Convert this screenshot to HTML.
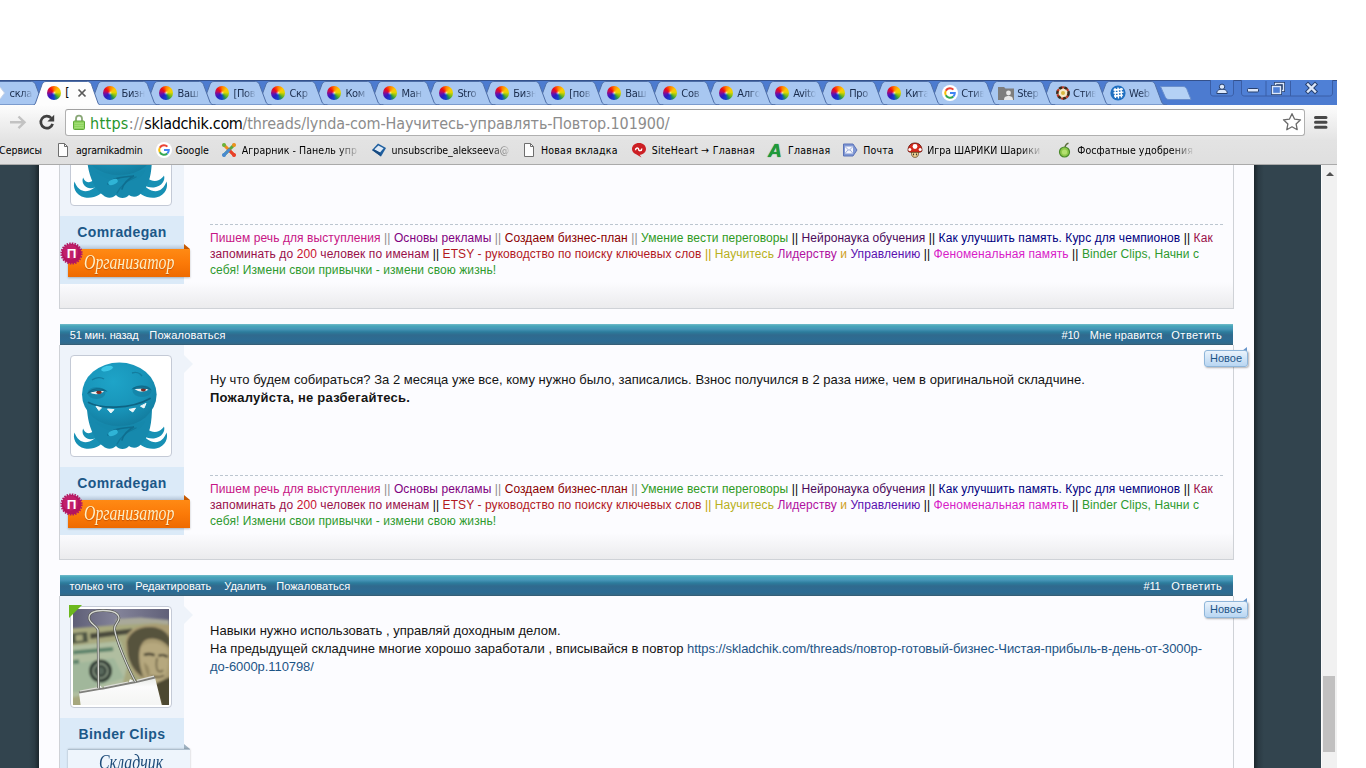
<!DOCTYPE html><html lang="ru"><head><meta charset="utf-8"><title>skladchik</title><style>
html,body{margin:0;padding:0}
body{width:1366px;height:768px;overflow:hidden;background:#fff;position:relative;font-family:"Liberation Sans",sans-serif}
#win{position:absolute;left:0;top:80px;width:1337px;height:688px;overflow:hidden;background:#fcfcff}
.abs{position:absolute}
#tabstrip{position:absolute;left:0;top:0;width:1337px;height:25px;background:#4c7bd0}
#toolbar{position:absolute;left:0;top:25px;width:1337px;height:35px;background:linear-gradient(#fdfdfd,#f1f1f1 45%,#e4e4e4)}
#bmbar{position:absolute;left:0;top:60px;width:1337px;height:24px;background:linear-gradient(#e3e3e3,#dfdfdf);border-bottom:1px solid #aaa;font-family:"DejaVu Sans Condensed","DejaVu Sans",sans-serif;font-size:10.5px;color:#000;white-space:nowrap}
.bm{position:absolute;top:3px;line-height:14px;letter-spacing:-0.25px}
.bmi{position:absolute;top:2px;width:16px;height:16px}
#omni{position:absolute;left:65px;top:4px;width:1238px;height:25px;background:#fff;border:1px solid #b0b0b0;border-top-color:#a0a0a0;border-radius:3px}
#url{position:absolute;left:24px;top:4px;font-family:"DejaVu Sans Condensed","DejaVu Sans",sans-serif;font-size:16px;line-height:20px;white-space:nowrap;color:#8c8c8c}
.tt{position:absolute;top:6.6px;height:14px;overflow:hidden;font-family:"DejaVu Sans Condensed","DejaVu Sans",sans-serif;font-size:11px;line-height:14px;letter-spacing:-.3px;white-space:nowrap;color:#1a2c4c}
.fade{-webkit-mask-image:linear-gradient(90deg,#000 50%,transparent 100%);mask-image:linear-gradient(90deg,#000 50%,transparent 100%)}
#page{position:absolute;left:0;top:85px;width:1321px;height:603px;background:#32444e;overflow:hidden}
#content{position:absolute;left:39px;top:0;width:1215px;height:603px;background:#fcfcff}
#sbar{position:absolute;left:1321px;top:85px;width:16px;height:603px;background:#f1f1f1}
.post{position:absolute;left:59px;width:1173px;border:1px solid #cfd2d7;border-top:none}
.hdr{position:absolute;left:60px;width:1173px;height:21px;background:linear-gradient(#74bccb 0,#47a6ba 2px,#4796b8 5px,#2c7c9c 8px,#306a8e 11px,#2c6c94 17px,#326a8a 19.5px,#36596f 21px);color:#fff;font-size:11px;line-height:21px;white-space:nowrap}
.hdr span{position:absolute;top:1px}
.ucol{position:absolute;left:60px;width:124px;background:#eef3fa}
.arrow{position:absolute;left:184px;width:0;height:0;border:9px solid transparent;border-left:9px solid #eef3fa;border-right:none}
.ava{position:absolute;left:70px;width:100px;height:100px;border:1px solid #c4cad6;border-radius:4px;background:#fff;overflow:hidden}
.ava svg{position:absolute;left:0;top:0}
.uname{position:absolute;left:60px;width:124px;text-align:center;font-weight:bold;font-size:14px;color:#1c5888;letter-spacing:.37px;line-height:18px}
.msg{position:absolute;left:210px;font-size:13px;line-height:18px;color:#141414;letter-spacing:.03px;white-space:nowrap}
.sig{position:absolute;left:210px;width:1013px;font-size:12px;line-height:16px;letter-spacing:.085px;white-space:nowrap}
.dash{position:absolute;left:210px;width:1013px;height:0;border-top:1px dashed #bcc6d0}
.new{position:absolute;left:1204px;width:42px;height:15px;border:1px solid #8fb6da;border-radius:3px;background:linear-gradient(#eaf3fc,#b9d6f2);color:#1c5486;font-size:11px;line-height:15px;text-align:center;box-shadow:1px 1px 2px rgba(0,0,0,.3)}
.newfold{position:absolute;left:1242px;width:0;height:0;border-left:5px solid transparent;border-bottom:4px solid #6896cc}
.rib{position:absolute;left:68px;width:122px;height:28px;background:linear-gradient(#ff8a14,#fb7a08 50%,#ee6a00);box-shadow:0 1px 2px rgba(0,0,0,.25)}
.ribfold{position:absolute;left:184px;width:0;height:0;border-left:6px solid #c85a00;border-top:5px solid transparent}
.ribt{position:absolute;left:84px;width:110px;font-family:"Liberation Serif",serif;font-style:italic;font-size:20px;line-height:28px;color:#ffefc4;white-space:nowrap;transform-origin:0 50%;transform:scaleX(.79);text-shadow:0 1px 1px rgba(160,60,0,.6)}
.badge{position:absolute;left:61px;width:21px;height:21px;border-radius:50%;background:radial-gradient(circle at 40% 35%,#d8307c,#a8105a 70%,#8a0848);color:#fff;font-weight:bold;font-size:13px;line-height:23px;text-align:center;box-shadow:0 0 0 1px rgba(168,16,90,.5)}
</style></head><body>
<div id="win">
<div id="tabstrip">
<svg class="abs" style="left:0;top:0" width="1337" height="25" viewBox="0 0 1337 25"><rect x="0" y="0" width="1337" height="1" fill="#34518c"/><path d="M1093.62,25 C1097.12,25 1098.12,24 1099.12,22 L1105.62,4.5 C1106.62,2.5 1107.62,1.5 1109.62,1.5 L1151.12,1.5 C1153.12,1.5 1154.12,2.5 1155.12,4.5 L1161.62,22 C1162.62,24 1163.62,25 1167.12,25 Z" fill="#a8c7f1" stroke="#4f6fa8" stroke-width="1"/><path d="M1037.6399999999999,25 C1041.1399999999999,25 1042.1399999999999,24 1043.1399999999999,22 L1049.6399999999999,4.5 C1050.6399999999999,2.5 1051.6399999999999,1.5 1053.6399999999999,1.5 L1095.1399999999999,1.5 C1097.1399999999999,1.5 1098.1399999999999,2.5 1099.1399999999999,4.5 L1105.6399999999999,22 C1106.6399999999999,24 1107.6399999999999,25 1111.1399999999999,25 Z" fill="#a8c7f1" stroke="#4f6fa8" stroke-width="1"/><path d="M981.66,25 C985.16,25 986.16,24 987.16,22 L993.66,4.5 C994.66,2.5 995.66,1.5 997.66,1.5 L1039.1599999999999,1.5 C1041.1599999999999,1.5 1042.1599999999999,2.5 1043.1599999999999,4.5 L1049.6599999999999,22 C1050.6599999999999,24 1051.6599999999999,25 1055.1599999999999,25 Z" fill="#a8c7f1" stroke="#4f6fa8" stroke-width="1"/><path d="M925.68,25 C929.18,25 930.18,24 931.18,22 L937.68,4.5 C938.68,2.5 939.68,1.5 941.68,1.5 L983.18,1.5 C985.18,1.5 986.18,2.5 987.18,4.5 L993.68,22 C994.68,24 995.68,25 999.18,25 Z" fill="#a8c7f1" stroke="#4f6fa8" stroke-width="1"/><path d="M869.6999999999999,25 C873.1999999999999,25 874.1999999999999,24 875.1999999999999,22 L881.6999999999999,4.5 C882.6999999999999,2.5 883.6999999999999,1.5 885.6999999999999,1.5 L927.1999999999999,1.5 C929.1999999999999,1.5 930.1999999999999,2.5 931.1999999999999,4.5 L937.6999999999999,22 C938.6999999999999,24 939.6999999999999,25 943.1999999999999,25 Z" fill="#a8c7f1" stroke="#4f6fa8" stroke-width="1"/><path d="M813.7199999999999,25 C817.2199999999999,25 818.2199999999999,24 819.2199999999999,22 L825.7199999999999,4.5 C826.7199999999999,2.5 827.7199999999999,1.5 829.7199999999999,1.5 L871.2199999999999,1.5 C873.2199999999999,1.5 874.2199999999999,2.5 875.2199999999999,4.5 L881.7199999999999,22 C882.7199999999999,24 883.7199999999999,25 887.2199999999999,25 Z" fill="#a8c7f1" stroke="#4f6fa8" stroke-width="1"/><path d="M757.74,25 C761.24,25 762.24,24 763.24,22 L769.74,4.5 C770.74,2.5 771.74,1.5 773.74,1.5 L815.24,1.5 C817.24,1.5 818.24,2.5 819.24,4.5 L825.74,22 C826.74,24 827.74,25 831.24,25 Z" fill="#a8c7f1" stroke="#4f6fa8" stroke-width="1"/><path d="M701.76,25 C705.26,25 706.26,24 707.26,22 L713.76,4.5 C714.76,2.5 715.76,1.5 717.76,1.5 L759.26,1.5 C761.26,1.5 762.26,2.5 763.26,4.5 L769.76,22 C770.76,24 771.76,25 775.26,25 Z" fill="#a8c7f1" stroke="#4f6fa8" stroke-width="1"/><path d="M645.78,25 C649.28,25 650.28,24 651.28,22 L657.78,4.5 C658.78,2.5 659.78,1.5 661.78,1.5 L703.28,1.5 C705.28,1.5 706.28,2.5 707.28,4.5 L713.78,22 C714.78,24 715.78,25 719.28,25 Z" fill="#a8c7f1" stroke="#4f6fa8" stroke-width="1"/><path d="M589.8,25 C593.3,25 594.3,24 595.3,22 L601.8,4.5 C602.8,2.5 603.8,1.5 605.8,1.5 L647.3,1.5 C649.3,1.5 650.3,2.5 651.3,4.5 L657.8,22 C658.8,24 659.8,25 663.3,25 Z" fill="#a8c7f1" stroke="#4f6fa8" stroke-width="1"/><path d="M533.8199999999999,25 C537.3199999999999,25 538.3199999999999,24 539.3199999999999,22 L545.8199999999999,4.5 C546.8199999999999,2.5 547.8199999999999,1.5 549.8199999999999,1.5 L591.3199999999999,1.5 C593.3199999999999,1.5 594.3199999999999,2.5 595.3199999999999,4.5 L601.8199999999999,22 C602.8199999999999,24 603.8199999999999,25 607.3199999999999,25 Z" fill="#a8c7f1" stroke="#4f6fa8" stroke-width="1"/><path d="M477.84,25 C481.34,25 482.34,24 483.34,22 L489.84,4.5 C490.84,2.5 491.84,1.5 493.84,1.5 L535.3399999999999,1.5 C537.3399999999999,1.5 538.3399999999999,2.5 539.3399999999999,4.5 L545.8399999999999,22 C546.8399999999999,24 547.8399999999999,25 551.3399999999999,25 Z" fill="#a8c7f1" stroke="#4f6fa8" stroke-width="1"/><path d="M421.85999999999996,25 C425.35999999999996,25 426.35999999999996,24 427.35999999999996,22 L433.85999999999996,4.5 C434.85999999999996,2.5 435.85999999999996,1.5 437.85999999999996,1.5 L479.35999999999996,1.5 C481.35999999999996,1.5 482.35999999999996,2.5 483.35999999999996,4.5 L489.85999999999996,22 C490.85999999999996,24 491.85999999999996,25 495.35999999999996,25 Z" fill="#a8c7f1" stroke="#4f6fa8" stroke-width="1"/><path d="M365.88,25 C369.38,25 370.38,24 371.38,22 L377.88,4.5 C378.88,2.5 379.88,1.5 381.88,1.5 L423.38,1.5 C425.38,1.5 426.38,2.5 427.38,4.5 L433.88,22 C434.88,24 435.88,25 439.38,25 Z" fill="#a8c7f1" stroke="#4f6fa8" stroke-width="1"/><path d="M309.9,25 C313.4,25 314.4,24 315.4,22 L321.9,4.5 C322.9,2.5 323.9,1.5 325.9,1.5 L367.4,1.5 C369.4,1.5 370.4,2.5 371.4,4.5 L377.9,22 C378.9,24 379.9,25 383.4,25 Z" fill="#a8c7f1" stroke="#4f6fa8" stroke-width="1"/><path d="M253.91999999999996,25 C257.41999999999996,25 258.41999999999996,24 259.41999999999996,22 L265.91999999999996,4.5 C266.91999999999996,2.5 267.91999999999996,1.5 269.91999999999996,1.5 L311.41999999999996,1.5 C313.41999999999996,1.5 314.41999999999996,2.5 315.41999999999996,4.5 L321.91999999999996,22 C322.91999999999996,24 323.91999999999996,25 327.41999999999996,25 Z" fill="#a8c7f1" stroke="#4f6fa8" stroke-width="1"/><path d="M197.94,25 C201.44,25 202.44,24 203.44,22 L209.94,4.5 C210.94,2.5 211.94,1.5 213.94,1.5 L255.44,1.5 C257.44,1.5 258.44,2.5 259.44,4.5 L265.94,22 C266.94,24 267.94,25 271.44,25 Z" fill="#a8c7f1" stroke="#4f6fa8" stroke-width="1"/><path d="M141.95999999999998,25 C145.45999999999998,25 146.45999999999998,24 147.45999999999998,22 L153.95999999999998,4.5 C154.95999999999998,2.5 155.95999999999998,1.5 157.95999999999998,1.5 L199.45999999999998,1.5 C201.45999999999998,1.5 202.45999999999998,2.5 203.45999999999998,4.5 L209.95999999999998,22 C210.95999999999998,24 211.95999999999998,25 215.45999999999998,25 Z" fill="#a8c7f1" stroke="#4f6fa8" stroke-width="1"/><path d="M85.97999999999999,25 C89.47999999999999,25 90.47999999999999,24 91.47999999999999,22 L97.97999999999999,4.5 C98.97999999999999,2.5 99.97999999999999,1.5 101.97999999999999,1.5 L143.48,1.5 C145.48,1.5 146.48,2.5 147.48,4.5 L153.98,22 C154.98,24 155.98,25 159.48,25 Z" fill="#a8c7f1" stroke="#4f6fa8" stroke-width="1"/><path d="M-25.979999999999997,25 C-22.479999999999997,25 -21.479999999999997,24 -20.479999999999997,22 L-13.979999999999997,4.5 C-12.979999999999997,2.5 -11.979999999999997,1.5 -9.979999999999997,1.5 L31.520000000000003,1.5 C33.52,1.5 34.52,2.5 35.52,4.5 L42.02,22 C43.02,24 44.02,25 47.52,25 Z" fill="#a8c7f1" stroke="#4f6fa8" stroke-width="1"/><path d="M30,26 C33.5,26 34.5,25 35.5,23 L42,4.5 C43,2.5 44,1.5 46,1.5 L87.5,1.5 C89.5,1.5 90.5,2.5 91.5,4.5 L98.0,23 C99.0,25 100.0,26 103.5,26 Z" fill="#fdfdfd" stroke="#4f6fa8" stroke-width="1"/><path d="M1160.5,6.5 L1183,6.5 C1185,6.5 1186,7.5 1187,9.5 L1191,19.5 L1169,19.5 C1167,19.5 1166,18.5 1165,16.5 Z" fill="#b4d1f5" stroke="#6a8fcc" stroke-width="1"/><path d="M1210.5,0 L1210.5,13 C1210.5,15 1211.5,16 1213.5,16 L1230.5,16 C1232.5,16 1233.5,15 1233.5,13 L1233.5,0" fill="#4f80d6" stroke="#3a5ea6" stroke-width="1"/><path d="M1241.5,0 L1241.5,13 C1241.5,15 1242.5,16 1244.5,16 L1329.5,16 C1331.5,16 1332.5,15 1332.5,13 L1332.5,0" fill="#4f80d6" stroke="#3a5ea6" stroke-width="1"/><path d="M1266,1 V16 M1290.5,1 V16" stroke="#3a5ea6" stroke-width="1"/><circle cx="1222" cy="6.8" r="2.7" fill="#dce8fb" stroke="#27406f" stroke-width="1"/><path d="M1216.8,13.5 C1216.8,10 1219,9.3 1222,9.3 C1225,9.3 1227.2,10 1227.2,13.5 Z" fill="#dce8fb" stroke="#27406f" stroke-width="1"/><rect x="1247.5" y="8.5" width="11" height="3.5" rx="1" fill="#dce8fb" stroke="#27406f" stroke-width="1"/><rect x="1275.5" y="3.5" width="8" height="7" fill="none" stroke="#27406f" stroke-width="3"/><rect x="1275.5" y="3.5" width="8" height="7" fill="none" stroke="#dce8fb" stroke-width="1.4"/><rect x="1272.5" y="6.5" width="8" height="7" fill="#4f80d6" stroke="#27406f" stroke-width="3"/><rect x="1272.5" y="6.5" width="8" height="7" fill="#4f80d6" stroke="#dce8fb" stroke-width="1.4"/><path d="M1308,4.5 L1315,11.5 M1315,4.5 L1308,11.5" stroke="#27406f" stroke-width="4.4" stroke-linecap="square"/><path d="M1308,4.5 L1315,11.5 M1315,4.5 L1308,11.5" stroke="#dce8fb" stroke-width="2.4" stroke-linecap="square"/><path d="M78.5,9.5 L85.5,16.5 M85.5,9.5 L78.5,16.5" stroke="#5a5a5a" stroke-width="1.7"/></svg>
<div class="abs" style="left:46.8px;top:5.8px;width:14.2px;height:14.4px;border-radius:50%;background:radial-gradient(circle,rgba(255,255,255,.9) 0,rgba(255,255,255,.3) 10%,rgba(255,255,255,0) 24%),conic-gradient(from 0deg,#ff7a00,#ffc800 50deg,#e0d400 85deg,#6cb81e 125deg,#1f8f5f 150deg,#1440d0 180deg,#2a1ec0 225deg,#6010b0 255deg,#b80c60 285deg,#ee0c18 315deg,#ff4a00 345deg,#ff7a00)"></div>
<div class="tt" style="left:65.3px;width:8px;color:#000;font-size:12px;top:5.6px">[</div>
<div class="abs" style="left:102.8px;top:5.8px;width:14.2px;height:14.4px;border-radius:50%;background:radial-gradient(circle,rgba(255,255,255,.9) 0,rgba(255,255,255,.3) 10%,rgba(255,255,255,0) 24%),conic-gradient(from 0deg,#ff7a00,#ffc800 50deg,#e0d400 85deg,#6cb81e 125deg,#1f8f5f 150deg,#1440d0 180deg,#2a1ec0 225deg,#6010b0 255deg,#b80c60 285deg,#ee0c18 315deg,#ff4a00 345deg,#ff7a00)"></div>
<div class="tt fade" style="left:121.5px;width:23px">Бизн</div>
<div class="abs" style="left:158.8px;top:5.8px;width:14.2px;height:14.4px;border-radius:50%;background:radial-gradient(circle,rgba(255,255,255,.9) 0,rgba(255,255,255,.3) 10%,rgba(255,255,255,0) 24%),conic-gradient(from 0deg,#ff7a00,#ffc800 50deg,#e0d400 85deg,#6cb81e 125deg,#1f8f5f 150deg,#1440d0 180deg,#2a1ec0 225deg,#6010b0 255deg,#b80c60 285deg,#ee0c18 315deg,#ff4a00 345deg,#ff7a00)"></div>
<div class="tt fade" style="left:177.5px;width:23px">Ваш</div>
<div class="abs" style="left:214.7px;top:5.8px;width:14.2px;height:14.4px;border-radius:50%;background:radial-gradient(circle,rgba(255,255,255,.9) 0,rgba(255,255,255,.3) 10%,rgba(255,255,255,0) 24%),conic-gradient(from 0deg,#ff7a00,#ffc800 50deg,#e0d400 85deg,#6cb81e 125deg,#1f8f5f 150deg,#1440d0 180deg,#2a1ec0 225deg,#6010b0 255deg,#b80c60 285deg,#ee0c18 315deg,#ff4a00 345deg,#ff7a00)"></div>
<div class="tt fade" style="left:233.4px;width:23px">[Пов</div>
<div class="abs" style="left:270.7px;top:5.8px;width:14.2px;height:14.4px;border-radius:50%;background:radial-gradient(circle,rgba(255,255,255,.9) 0,rgba(255,255,255,.3) 10%,rgba(255,255,255,0) 24%),conic-gradient(from 0deg,#ff7a00,#ffc800 50deg,#e0d400 85deg,#6cb81e 125deg,#1f8f5f 150deg,#1440d0 180deg,#2a1ec0 225deg,#6010b0 255deg,#b80c60 285deg,#ee0c18 315deg,#ff4a00 345deg,#ff7a00)"></div>
<div class="tt fade" style="left:289.4px;width:23px">Скр</div>
<div class="abs" style="left:326.7px;top:5.8px;width:14.2px;height:14.4px;border-radius:50%;background:radial-gradient(circle,rgba(255,255,255,.9) 0,rgba(255,255,255,.3) 10%,rgba(255,255,255,0) 24%),conic-gradient(from 0deg,#ff7a00,#ffc800 50deg,#e0d400 85deg,#6cb81e 125deg,#1f8f5f 150deg,#1440d0 180deg,#2a1ec0 225deg,#6010b0 255deg,#b80c60 285deg,#ee0c18 315deg,#ff4a00 345deg,#ff7a00)"></div>
<div class="tt fade" style="left:345.4px;width:23px">Ком</div>
<div class="abs" style="left:382.7px;top:5.8px;width:14.2px;height:14.4px;border-radius:50%;background:radial-gradient(circle,rgba(255,255,255,.9) 0,rgba(255,255,255,.3) 10%,rgba(255,255,255,0) 24%),conic-gradient(from 0deg,#ff7a00,#ffc800 50deg,#e0d400 85deg,#6cb81e 125deg,#1f8f5f 150deg,#1440d0 180deg,#2a1ec0 225deg,#6010b0 255deg,#b80c60 285deg,#ee0c18 315deg,#ff4a00 345deg,#ff7a00)"></div>
<div class="tt fade" style="left:401.4px;width:23px">Ман</div>
<div class="abs" style="left:438.7px;top:5.8px;width:14.2px;height:14.4px;border-radius:50%;background:radial-gradient(circle,rgba(255,255,255,.9) 0,rgba(255,255,255,.3) 10%,rgba(255,255,255,0) 24%),conic-gradient(from 0deg,#ff7a00,#ffc800 50deg,#e0d400 85deg,#6cb81e 125deg,#1f8f5f 150deg,#1440d0 180deg,#2a1ec0 225deg,#6010b0 255deg,#b80c60 285deg,#ee0c18 315deg,#ff4a00 345deg,#ff7a00)"></div>
<div class="tt fade" style="left:457.4px;width:23px">Stro</div>
<div class="abs" style="left:494.6px;top:5.8px;width:14.2px;height:14.4px;border-radius:50%;background:radial-gradient(circle,rgba(255,255,255,.9) 0,rgba(255,255,255,.3) 10%,rgba(255,255,255,0) 24%),conic-gradient(from 0deg,#ff7a00,#ffc800 50deg,#e0d400 85deg,#6cb81e 125deg,#1f8f5f 150deg,#1440d0 180deg,#2a1ec0 225deg,#6010b0 255deg,#b80c60 285deg,#ee0c18 315deg,#ff4a00 345deg,#ff7a00)"></div>
<div class="tt fade" style="left:513.3px;width:23px">Бизн</div>
<div class="abs" style="left:550.6px;top:5.8px;width:14.2px;height:14.4px;border-radius:50%;background:radial-gradient(circle,rgba(255,255,255,.9) 0,rgba(255,255,255,.3) 10%,rgba(255,255,255,0) 24%),conic-gradient(from 0deg,#ff7a00,#ffc800 50deg,#e0d400 85deg,#6cb81e 125deg,#1f8f5f 150deg,#1440d0 180deg,#2a1ec0 225deg,#6010b0 255deg,#b80c60 285deg,#ee0c18 315deg,#ff4a00 345deg,#ff7a00)"></div>
<div class="tt fade" style="left:569.3px;width:23px">[пов</div>
<div class="abs" style="left:606.6px;top:5.8px;width:14.2px;height:14.4px;border-radius:50%;background:radial-gradient(circle,rgba(255,255,255,.9) 0,rgba(255,255,255,.3) 10%,rgba(255,255,255,0) 24%),conic-gradient(from 0deg,#ff7a00,#ffc800 50deg,#e0d400 85deg,#6cb81e 125deg,#1f8f5f 150deg,#1440d0 180deg,#2a1ec0 225deg,#6010b0 255deg,#b80c60 285deg,#ee0c18 315deg,#ff4a00 345deg,#ff7a00)"></div>
<div class="tt fade" style="left:625.3px;width:23px">Ваш</div>
<div class="abs" style="left:662.6px;top:5.8px;width:14.2px;height:14.4px;border-radius:50%;background:radial-gradient(circle,rgba(255,255,255,.9) 0,rgba(255,255,255,.3) 10%,rgba(255,255,255,0) 24%),conic-gradient(from 0deg,#ff7a00,#ffc800 50deg,#e0d400 85deg,#6cb81e 125deg,#1f8f5f 150deg,#1440d0 180deg,#2a1ec0 225deg,#6010b0 255deg,#b80c60 285deg,#ee0c18 315deg,#ff4a00 345deg,#ff7a00)"></div>
<div class="tt fade" style="left:681.3px;width:23px">Сов</div>
<div class="abs" style="left:718.6px;top:5.8px;width:14.2px;height:14.4px;border-radius:50%;background:radial-gradient(circle,rgba(255,255,255,.9) 0,rgba(255,255,255,.3) 10%,rgba(255,255,255,0) 24%),conic-gradient(from 0deg,#ff7a00,#ffc800 50deg,#e0d400 85deg,#6cb81e 125deg,#1f8f5f 150deg,#1440d0 180deg,#2a1ec0 225deg,#6010b0 255deg,#b80c60 285deg,#ee0c18 315deg,#ff4a00 345deg,#ff7a00)"></div>
<div class="tt fade" style="left:737.3px;width:23px">Алго</div>
<div class="abs" style="left:774.5px;top:5.8px;width:14.2px;height:14.4px;border-radius:50%;background:radial-gradient(circle,rgba(255,255,255,.9) 0,rgba(255,255,255,.3) 10%,rgba(255,255,255,0) 24%),conic-gradient(from 0deg,#ff7a00,#ffc800 50deg,#e0d400 85deg,#6cb81e 125deg,#1f8f5f 150deg,#1440d0 180deg,#2a1ec0 225deg,#6010b0 255deg,#b80c60 285deg,#ee0c18 315deg,#ff4a00 345deg,#ff7a00)"></div>
<div class="tt fade" style="left:793.2px;width:23px">Avito</div>
<div class="abs" style="left:830.5px;top:5.8px;width:14.2px;height:14.4px;border-radius:50%;background:radial-gradient(circle,rgba(255,255,255,.9) 0,rgba(255,255,255,.3) 10%,rgba(255,255,255,0) 24%),conic-gradient(from 0deg,#ff7a00,#ffc800 50deg,#e0d400 85deg,#6cb81e 125deg,#1f8f5f 150deg,#1440d0 180deg,#2a1ec0 225deg,#6010b0 255deg,#b80c60 285deg,#ee0c18 315deg,#ff4a00 345deg,#ff7a00)"></div>
<div class="tt fade" style="left:849.2px;width:23px">Про</div>
<div class="abs" style="left:886.5px;top:5.8px;width:14.2px;height:14.4px;border-radius:50%;background:radial-gradient(circle,rgba(255,255,255,.9) 0,rgba(255,255,255,.3) 10%,rgba(255,255,255,0) 24%),conic-gradient(from 0deg,#ff7a00,#ffc800 50deg,#e0d400 85deg,#6cb81e 125deg,#1f8f5f 150deg,#1440d0 180deg,#2a1ec0 225deg,#6010b0 255deg,#b80c60 285deg,#ee0c18 315deg,#ff4a00 345deg,#ff7a00)"></div>
<div class="tt fade" style="left:905.2px;width:23px">Кита</div>
<div class="tt fade" style="left:961.2px;width:23px">Стив</div>
<div class="tt fade" style="left:1017.2px;width:23px">Step</div>
<div class="tt fade" style="left:1073.1px;width:23px">Стив</div>
<div class="tt fade" style="left:1129.1px;width:23px">Web</div>
<div class="tt fade" style="left:9.5px;width:23px">скла</div>
<svg class="abs" style="left:-9px;top:5px" width="14" height="16" viewBox="0 0 14 16"><path d="M0,2 H9 L13.5,8 L9,14 H0 Z" fill="#fff" stroke="#c8d4e8" stroke-width="1"/></svg>
<svg class="abs" style="left:942px;top:5px" width="16" height="16" viewBox="0 0 16 16"><circle cx="8" cy="8" r="8" fill="#fff"/><path d="M8,3.2 A4.8,4.8 0 0 1 11.4,4.6" fill="none" stroke="#ea4335" stroke-width="2"/><path d="M8,3.2 A4.8,4.8 0 0 0 3.8,5.7" fill="none" stroke="#ea4335" stroke-width="2"/><path d="M3.8,5.7 A4.8,4.8 0 0 0 3.8,10.3" fill="none" stroke="#fbbc05" stroke-width="2"/><path d="M3.8,10.3 A4.8,4.8 0 0 0 11.3,11.5" fill="none" stroke="#34a853" stroke-width="2"/><path d="M11.3,11.5 A4.8,4.8 0 0 0 12.8,8 L8,8" fill="none" stroke="#4285f4" stroke-width="2"/></svg>
<svg class="abs" style="left:998.2px;top:5px" width="16" height="16" viewBox="0 0 16 16"><path d="M0,2 H6 L7.5,3.5 H16 V15 H0 Z" fill="#7d7d7d"/><circle cx="10.5" cy="8" r="2.4" fill="#e8e8e8"/><path d="M6,15 C6,11.8 8,11 10.5,11 C13,11 15,11.8 15,15 Z" fill="#e8e8e8"/></svg>
<svg class="abs" style="left:1054.6px;top:5px" width="16" height="16" viewBox="0 0 16 16"><circle cx="8" cy="8" r="5.6" fill="#f4e8c8" stroke="#3a2a1a" stroke-width="2.6" stroke-dasharray="3.2 2.2"/><circle cx="8" cy="8" r="5.6" fill="none" stroke="#b8321e" stroke-width="2.2" stroke-dasharray="2.2 3.2" stroke-dashoffset="2.5"/><circle cx="8" cy="8" r="2" fill="#d8b840"/></svg>
<svg class="abs" style="left:1109.6px;top:5px" width="16" height="16" viewBox="0 0 16 16"><circle cx="8" cy="8" r="7.6" fill="#1f6fc0"/><path d="M5,3 L5.5,13 M8,2.5 L8.5,13.5 M11,3 L11.5,12.5 M3.5,5 L13,4.2 M3.5,8 L13.5,7.2 M4,11 L13,10.2" stroke="#fff" stroke-width="1.3" fill="none"/></svg>
</div>
<div id="toolbar">
<svg class="abs" style="left:0;top:0" width="1337" height="35" viewBox="0 0 1337 35"><path d="M10,17.3 H23 M18.5,11.5 L24.5,17.3 L18.5,23.2" fill="none" stroke="#c2c2c2" stroke-width="2.4" stroke-linejoin="miter"/><path d="M51.3,13.2 A6,6 0 1 0 52.6,18.8" fill="none" stroke="#404040" stroke-width="2.7"/><path d="M54.2,9.8 V16.6 H47.4 Z" fill="#404040"/><path d="M1315.5,12.5 H1326 M1315.5,17.3 H1326 M1315.5,22.3 H1326" stroke="#484848" stroke-width="3" stroke-linecap="round"/></svg>
<div id="omni"><svg class="abs" style="left:6px;top:4px" width="14" height="17" viewBox="0 0 14 17"><path d="M4,7.5 V4.8 C4,2.6 5.2,1.6 7,1.6 C8.8,1.6 10,2.6 10,4.8 V7.5" fill="none" stroke="#8aa878" stroke-width="1.8"/><rect x="1.5" y="7" width="11" height="8.5" rx="1" fill="#8ed45e" stroke="#5fa838" stroke-width="1"/><path d="M2.5,9.5 H11.5 M2.5,11.5 H11.5 M2.5,13.5 H11.5" stroke="#a6e07c" stroke-width=".8"/></svg><svg class="abs" style="left:1216px;top:2px" width="20" height="20" viewBox="0 0 20 20"><path d="M10,1.7 L12.5,7.1 L18.5,7.8 L14.1,11.9 L15.2,17.7 L10,14.8 L4.8,17.7 L5.9,11.9 L1.5,7.8 L7.5,7.1 Z" fill="#fff" stroke="#6a6a6a" stroke-width="1.3" stroke-linejoin="round"/></svg><div id="url"><span style="color:#27952c;letter-spacing:.33px">https</span><span style="color:#8c8c8c;letter-spacing:.33px">://</span><span style="color:#000;letter-spacing:-.32px">skladchik.com</span><span style="letter-spacing:-.115px">/threads/lynda-com-Научитесь-управлять-Повтор.101900/</span></div></div>
</div>
<div id="bmbar">
<span class="bm" style="left:-1px;letter-spacing:0.05px">Сервисы</span>
<span class="bm" style="left:76px;letter-spacing:-0.17px">agrarnikadmin</span>
<span class="bm" style="left:175.5px;letter-spacing:0px">Google</span>
<span class="bm" style="left:241.8px;letter-spacing:0.06px;width:118px;overflow:hidden;-webkit-mask-image:linear-gradient(90deg,#000 96px,transparent 118px);mask-image:linear-gradient(90deg,#000 96px,transparent 118px)">Аграрник - Панель упр</span>
<span class="bm" style="left:391.5px;letter-spacing:-0.07px;width:120px;overflow:hidden;-webkit-mask-image:linear-gradient(90deg,#000 98px,transparent 120px);mask-image:linear-gradient(90deg,#000 98px,transparent 120px)">unsubscribe_alekseeva@</span>
<span class="bm" style="left:541px;letter-spacing:0.2px">Новая вкладка</span>
<span class="bm" style="left:651.8px;letter-spacing:0.21px">SiteHeart → Главная</span>
<span class="bm" style="left:788px;letter-spacing:0.23px">Главная</span>
<span class="bm" style="left:863.2px;letter-spacing:0.16px">Почта</span>
<span class="bm" style="left:927.3px;letter-spacing:0px;width:116px;overflow:hidden;-webkit-mask-image:linear-gradient(90deg,#000 94px,transparent 116px);mask-image:linear-gradient(90deg,#000 94px,transparent 116px)">Игра ШАРИКИ Шарики</span>
<span class="bm" style="left:1077.3px;letter-spacing:0.06px;width:118px;overflow:hidden;-webkit-mask-image:linear-gradient(90deg,#000 96px,transparent 118px);mask-image:linear-gradient(90deg,#000 96px,transparent 118px)">Фосфатные удобрения</span>
<svg class="bmi" style="left:55px" viewBox="0 0 16 16"><path d="M3.5,1.5 H9.5 L12.5,4.5 V14.5 H3.5 Z" fill="#fdfdfd" stroke="#6e6e6e" stroke-width="1"/><path d="M9.5,1.5 V4.5 H12.5" fill="none" stroke="#6e6e6e" stroke-width="1"/></svg>
<svg class="bmi" style="left:521px" viewBox="0 0 16 16"><path d="M3.5,1.5 H9.5 L12.5,4.5 V14.5 H3.5 Z" fill="#fdfdfd" stroke="#6e6e6e" stroke-width="1"/><path d="M9.5,1.5 V4.5 H12.5" fill="none" stroke="#6e6e6e" stroke-width="1"/></svg>
<svg class="abs" style="left:156px;top:2px" width="16" height="16" viewBox="0 0 16 16"><circle cx="8" cy="8" r="8" fill="#fff"/><path d="M8,3.2 A4.8,4.8 0 0 1 11.4,4.6" fill="none" stroke="#ea4335" stroke-width="2"/><path d="M8,3.2 A4.8,4.8 0 0 0 3.8,5.7" fill="none" stroke="#ea4335" stroke-width="2"/><path d="M3.8,5.7 A4.8,4.8 0 0 0 3.8,10.3" fill="none" stroke="#fbbc05" stroke-width="2"/><path d="M3.8,10.3 A4.8,4.8 0 0 0 11.3,11.5" fill="none" stroke="#34a853" stroke-width="2"/><path d="M11.3,11.5 A4.8,4.8 0 0 0 12.8,8 L8,8" fill="none" stroke="#4285f4" stroke-width="2"/></svg>
<svg class="bmi" style="left:221px" viewBox="0 0 16 16"><path d="M3,3 L13,13" stroke="#f08a1e" stroke-width="3" stroke-linecap="round"/><path d="M13,3 L3,13" stroke="#5aa83c" stroke-width="3" stroke-linecap="round"/><circle cx="3" cy="3" r="2" fill="#6ab43c"/><circle cx="13" cy="3" r="2" fill="#f0901e"/><circle cx="13" cy="13" r="2" fill="#e8402a"/><circle cx="3" cy="13" r="2" fill="#4a8ad0"/><path d="M8,8 L13,13" stroke="#e8402a" stroke-width="3" stroke-linecap="round"/><path d="M8,8 L3,13" stroke="#4a8ad0" stroke-width="3" stroke-linecap="round"/></svg>
<svg class="bmi" style="left:371px" viewBox="0 0 16 16"><path d="M1,8 L7,1.5 L15,6 L10,14.5 Z" fill="#1f5f9f"/><path d="M3.2,7.6 L7.4,3.4 L12.6,6.2 L9,10.6 Z" fill="#dfeaf6"/><path d="M1,8 L10,14.5 L9,10.6 L3.2,7.6 Z" fill="#174a80"/></svg>
<svg class="bmi" style="left:631px" viewBox="0 0 16 16"><path d="M8,1 C12,1 15,3.6 15,7 C15,10.4 12,12.6 8.6,12.8 L10.5,15.5 L5.5,12.4 C2.6,11.6 1,9.6 1,7 C1,3.6 4,1 8,1 Z" fill="#cc1f24"/><path d="M4.5,8.2 C4.5,5.4 7.6,5.4 7.6,7.2 C7.6,9.4 10.8,9.2 10.8,6.4" stroke="#fff" stroke-width="1.4" fill="none"/></svg>
<div class="abs" style="left:768px;top:0px;font-family:'Liberation Sans',sans-serif;font-weight:bold;font-style:italic;font-size:19px;line-height:22px;color:#1f9a3a;text-shadow:0 0 1px #0a6a20">A</div>
<svg class="bmi" style="left:842px" viewBox="0 0 16 16"><path d="M1.5,2 H11 L15,8 L11,14 H1.5 Z" fill="#7f97d4" stroke="#5a72b8" stroke-width="1"/><rect x="3" y="4.5" width="8" height="7" fill="#f4f6fc"/><path d="M3,4.5 L7,8.5 L11,4.5 M3,11.5 L6,7.8 M11,11.5 L8,7.8" stroke="#8a9ad0" stroke-width=".8" fill="none"/></svg>
<svg class="bmi" style="left:907px" viewBox="0 0 16 16"><path d="M1,8.5 C1,3.5 4,1 8,1 C12,1 15,3.5 15,8.5 C15,10 13,10.5 8,10.5 C3,10.5 1,10 1,8.5 Z" fill="#d42a1e" stroke="#5a1008" stroke-width=".8"/><circle cx="8" cy="4.5" r="2.4" fill="#fff"/><circle cx="2.8" cy="7.6" r="1.5" fill="#fff"/><circle cx="13.2" cy="7.6" r="1.5" fill="#fff"/><path d="M4.5,10.3 C4.5,14 5.5,15.3 8,15.3 C10.5,15.3 11.5,14 11.5,10.3 Z" fill="#f4d89a" stroke="#5a3a10" stroke-width=".8"/><path d="M6.6,11.5 V13.3 M9.4,11.5 V13.3" stroke="#222" stroke-width="1"/></svg>
<svg class="bmi" style="left:1057px" viewBox="0 0 16 16"><circle cx="7.5" cy="10" r="5" fill="#8ec84a" stroke="#4a8a2a" stroke-width="1.2"/><circle cx="7.5" cy="10" r="2.6" fill="#b4e070"/><path d="M8,5 C8.5,3 10,1.6 11.5,1.2" stroke="#5a6a3a" stroke-width="1.3" fill="none"/></svg>
</div>
<div id="page"><div class="abs" style="left:1254px;top:0;width:10px;height:603px;background:linear-gradient(90deg,#1c262c,#2b3b44 45%,#32444e)"></div><div class="abs" style="left:29px;top:0;width:10px;height:603px;background:linear-gradient(270deg,#1c262c,#2b3b44 45%,#32444e)"></div><div id="content"></div>
<div class="post" style="top:-71px;height:214px;background:linear-gradient(#fcfcff,#fcfcff 188px,#ebebed)"></div>
<div class="ucol" style="top:-71px;height:122px"></div>
<div class="arrow" style="top:-61px"></div>
<div class="ucol" style="top:51px;height:68px;background:#dbeaf8"></div>
<div class="ava" style="top:-61px"><svg style="left:-1px;top:-1px" width="102" height="102" viewBox="0 0 102 102"><defs><radialGradient id="og" cx="42%" cy="30%" r="75%"><stop offset="0" stop-color="#1ea4c8"/><stop offset=".6" stop-color="#1893b8"/><stop offset="1" stop-color="#127a9c"/></radialGradient></defs>
<g transform="translate(0,1)"><g fill="#1790b4"><path d="M30,75 C26,85 15,89 9.5,84 C6.5,81.5 5.5,79 4.6,76.5 C2.5,81 5,90.5 15,92.5 C24,94 33,89 36,82 Z"/><path d="M27,67 C26,75 20,79 16,76.5 C14.3,75.3 13.6,73.8 13.2,72.5 C11.3,76.5 13.5,82.5 20,83.2 C26,83.8 31,79 32,72 Z"/><g transform="translate(101,0) scale(-1,1)"><path d="M30,75 C26,85 15,89 9.5,84 C6.5,81.5 5.5,79 4.6,76.5 C2.5,81 5,90.5 15,92.5 C24,94 33,89 36,82 Z"/><path d="M27,66 C26,74 18,78 12,75 C9.5,73.6 8,72 7,70.5 C5.5,75 9,81.5 17,82.4 C25,83 31,79 32,72 Z"/></g></g>
<path d="M17,50 C17,68 24,84 33,90 C37,94 43,93 46,90 C49,94 56,94 59,90 C63,93 69,92 72,87 C80,80 82,66 82,50 Z" fill="#1689ad"/>
<ellipse cx="49.3" cy="38.5" rx="37.3" ry="32" fill="url(#og)"/>
<path d="M25,66 C35,71 63,71 75,65 C72,72 68,75 60,76 C50,77 36,76 25,66 Z" fill="#1587aa" opacity=".6"/>
<ellipse cx="37" cy="12.6" rx="6" ry="2.6" fill="#3cc6e6" transform="rotate(-14 37 12.6)"/>
<path d="M22,24 C26,21 31,21 34,23" stroke="#137d9f" stroke-width="1.4" fill="none"/><path d="M62,17 C66,15.5 70,17 72,20" stroke="#137d9f" stroke-width="1.4" fill="none"/>
<ellipse cx="26.5" cy="37" rx="9" ry="6" fill="#137a9c" opacity=".55"/><ellipse cx="72" cy="35" rx="9.5" ry="6" fill="#137a9c" opacity=".55"/>
<path d="M20,36.6 C23,35 31,34.2 34,35 C32,38.4 24,39.4 20,36.6 Z" fill="#eef2f2"/><ellipse cx="29" cy="36.2" rx="2.6" ry="1.9" fill="#7a2a24"/>
<path d="M18.5,36.8 C21,32.6 32,31.4 35.5,34.6 C31,33.6 23,34.6 18.5,36.8 Z" fill="#1585a8" stroke="#0f6a8a" stroke-width="1.2"/>
<path d="M64.5,33 C68,32.4 75,32.4 78.5,33.6 C76,36.4 68,36.2 64.5,33 Z" fill="#eef2f2"/><ellipse cx="73.4" cy="33.8" rx="2.5" ry="1.8" fill="#7a2a24"/>
<path d="M63,32.6 C66,29.4 77,29.4 80,33.2 C76,32 68,31.8 63,32.6 Z" fill="#1585a8" stroke="#0f6a8a" stroke-width="1.2"/>
<path d="M18.5,46.5 C30,52.5 60,54 80,42.5" stroke="#0e6484" stroke-width="1.7" fill="none" stroke-linecap="round"/>
<path d="M26,50.3 L31.5,51.8 L29,54.6 Z M37.5,53 L44,53.6 L40.8,57 Z M59,53.4 L65.5,52.2 L62.8,56 Z M70.5,50.2 L76,47.4 L74,52 Z" fill="#eef8fa" stroke="#eef8fa" stroke-width="1" stroke-linejoin="round"/>
<path d="M38,79 C42,73 52,72 64,71 C58,74 54,77 52,84" stroke="#0f6f90" stroke-width="1.6" fill="none" stroke-linecap="round"/>
<ellipse cx="43" cy="77" rx="5" ry="2.6" fill="#2fb4d6" transform="rotate(-20 43 77)"/>
<path d="M47,88 C50,82 56,76 66,72" stroke="#0f6f90" stroke-width="1.3" fill="none" stroke-linecap="round" opacity=".7"/>
</g></svg>
</div>
<div class="uname" style="top:58px">Comradegan</div>
<div class="abs" style="left:68px;top:79px;width:116px;height:5px;background:linear-gradient(rgba(90,110,140,0),rgba(90,110,140,.28))"></div>
<div class="ribfold" style="top:79px"></div>
<div class="rib" style="top:84px"></div>
<div class="ribt" style="top:83px">Организатор</div>
<svg class="abs" style="left:60px;top:77px" width="23" height="23" viewBox="0 0 23 23"><circle cx="11.5" cy="11.5" r="10.2" fill="none" stroke="#b01c64" stroke-width="1.8" stroke-dasharray="1.6 1.07"/><circle cx="11.5" cy="11.5" r="9.8" fill="#b4145e"/><circle cx="10.5" cy="10" r="7.5" fill="#cc2a74" opacity=".55"/><text x="11.6" y="16.3" text-anchor="middle" font-family="Liberation Sans,sans-serif" font-weight="bold" font-size="13.5" fill="#fff">П</text></svg>
<div class="dash" style="top:59px"></div>
<div class="sig" style="top:65px"><span style="color:#c71585">Пишем речь для выступления</span> <span style="color:#8c8c8c">||</span> <span style="color:#800080">Основы рекламы</span> <span style="color:#8c8c8c">||</span> <span style="color:#8b0000">Создаем бизнес-план</span> <span style="color:#8c8c8c">||</span> <span style="color:#2f9a1e">Умение вести переговоры</span> <span style="color:#000">||</span> <span style="color:#4b0a5a">Нейронаука обучения</span> <span style="color:#000">||</span> <span style="color:#000080">Как улучшить память. Курс для чемпионов</span> <span style="color:#000">||</span> <span style="color:#99104a">Как</span><br><span style="color:#99104a">запоминать до <span style="color:#c8102e">200</span> человек по именам</span> <span style="color:#000">||</span> <span style="color:#b2181e">ETSY - руководство по поиску ключевых слов</span> <span style="color:#c0a000">||</span> <span style="color:#b8b020">Научитесь</span> <span style="color:#b010a0">Лидерству</span> <span style="color:#d0a020">и</span> <span style="color:#5a10b0">Управлению</span> <span style="color:#000">||</span> <span style="color:#d81cc8">Феноменальная память</span> <span style="color:#000">||</span> <span style="color:#2e9a2e">Binder Clips, Начни с</span><br><span style="color:#2e9a2e">себя! Измени свои привычки - измени свою жизнь!</span></div>
<div class="hdr" style="top:159px"><span style="left:9.7px;letter-spacing:-.15px">51 мин. назад</span><span style="left:89.3px;letter-spacing:.2px">Пожаловаться</span><span style="left:1001.5px;letter-spacing:-.2px">#10</span><span style="left:1029.7px;letter-spacing:.12px">Мне нравится</span><span style="left:1111.3px;letter-spacing:.5px">Ответить</span></div>
<div class="post" style="top:180px;height:214px;background:linear-gradient(#fcfcff,#fcfcff 188px,#ebebed)"></div>
<div class="ucol" style="top:180px;height:122px"></div>
<div class="arrow" style="top:190px"></div>
<div class="ucol" style="top:302px;height:68px;background:#dbeaf8"></div>
<div class="ava" style="top:190px"><svg style="left:-1px;top:-1px" width="102" height="102" viewBox="0 0 102 102">
<g transform="translate(0,1)"><g fill="#1790b4"><path d="M30,75 C26,85 15,89 9.5,84 C6.5,81.5 5.5,79 4.6,76.5 C2.5,81 5,90.5 15,92.5 C24,94 33,89 36,82 Z"/><path d="M27,67 C26,75 20,79 16,76.5 C14.3,75.3 13.6,73.8 13.2,72.5 C11.3,76.5 13.5,82.5 20,83.2 C26,83.8 31,79 32,72 Z"/><g transform="translate(101,0) scale(-1,1)"><path d="M30,75 C26,85 15,89 9.5,84 C6.5,81.5 5.5,79 4.6,76.5 C2.5,81 5,90.5 15,92.5 C24,94 33,89 36,82 Z"/><path d="M27,66 C26,74 18,78 12,75 C9.5,73.6 8,72 7,70.5 C5.5,75 9,81.5 17,82.4 C25,83 31,79 32,72 Z"/></g></g>
<path d="M17,50 C17,68 24,84 33,90 C37,94 43,93 46,90 C49,94 56,94 59,90 C63,93 69,92 72,87 C80,80 82,66 82,50 Z" fill="#1689ad"/>
<ellipse cx="49.3" cy="38.5" rx="37.3" ry="32" fill="url(#og)"/>
<path d="M25,66 C35,71 63,71 75,65 C72,72 68,75 60,76 C50,77 36,76 25,66 Z" fill="#1587aa" opacity=".6"/>
<ellipse cx="37" cy="12.6" rx="6" ry="2.6" fill="#3cc6e6" transform="rotate(-14 37 12.6)"/>
<path d="M22,24 C26,21 31,21 34,23" stroke="#137d9f" stroke-width="1.4" fill="none"/><path d="M62,17 C66,15.5 70,17 72,20" stroke="#137d9f" stroke-width="1.4" fill="none"/>
<ellipse cx="26.5" cy="37" rx="9" ry="6" fill="#137a9c" opacity=".55"/><ellipse cx="72" cy="35" rx="9.5" ry="6" fill="#137a9c" opacity=".55"/>
<path d="M20,36.6 C23,35 31,34.2 34,35 C32,38.4 24,39.4 20,36.6 Z" fill="#eef2f2"/><ellipse cx="29" cy="36.2" rx="2.6" ry="1.9" fill="#7a2a24"/>
<path d="M18.5,36.8 C21,32.6 32,31.4 35.5,34.6 C31,33.6 23,34.6 18.5,36.8 Z" fill="#1585a8" stroke="#0f6a8a" stroke-width="1.2"/>
<path d="M64.5,33 C68,32.4 75,32.4 78.5,33.6 C76,36.4 68,36.2 64.5,33 Z" fill="#eef2f2"/><ellipse cx="73.4" cy="33.8" rx="2.5" ry="1.8" fill="#7a2a24"/>
<path d="M63,32.6 C66,29.4 77,29.4 80,33.2 C76,32 68,31.8 63,32.6 Z" fill="#1585a8" stroke="#0f6a8a" stroke-width="1.2"/>
<path d="M18.5,46.5 C30,52.5 60,54 80,42.5" stroke="#0e6484" stroke-width="1.7" fill="none" stroke-linecap="round"/>
<path d="M26,50.3 L31.5,51.8 L29,54.6 Z M37.5,53 L44,53.6 L40.8,57 Z M59,53.4 L65.5,52.2 L62.8,56 Z M70.5,50.2 L76,47.4 L74,52 Z" fill="#eef8fa" stroke="#eef8fa" stroke-width="1" stroke-linejoin="round"/>
<path d="M38,79 C42,73 52,72 64,71 C58,74 54,77 52,84" stroke="#0f6f90" stroke-width="1.6" fill="none" stroke-linecap="round"/>
<ellipse cx="43" cy="77" rx="5" ry="2.6" fill="#2fb4d6" transform="rotate(-20 43 77)"/>
<path d="M47,88 C50,82 56,76 66,72" stroke="#0f6f90" stroke-width="1.3" fill="none" stroke-linecap="round" opacity=".7"/>
</g></svg>
</div>
<div class="uname" style="top:309px">Comradegan</div>
<div class="abs" style="left:68px;top:330px;width:116px;height:5px;background:linear-gradient(rgba(90,110,140,0),rgba(90,110,140,.28))"></div>
<div class="ribfold" style="top:330px"></div>
<div class="rib" style="top:335px"></div>
<div class="ribt" style="top:334px">Организатор</div>
<svg class="abs" style="left:60px;top:328px" width="23" height="23" viewBox="0 0 23 23"><circle cx="11.5" cy="11.5" r="10.2" fill="none" stroke="#b01c64" stroke-width="1.8" stroke-dasharray="1.6 1.07"/><circle cx="11.5" cy="11.5" r="9.8" fill="#b4145e"/><circle cx="10.5" cy="10" r="7.5" fill="#cc2a74" opacity=".55"/><text x="11.6" y="16.3" text-anchor="middle" font-family="Liberation Sans,sans-serif" font-weight="bold" font-size="13.5" fill="#fff">П</text></svg>
<div class="msg" style="top:206px">Ну что будем собираться? За 2 месяца уже все, кому нужно было, записались. Взнос получился в 2 раза ниже, чем в оригинальной складчине.<br><b style="letter-spacing:.24px">Пожалуйста, не разбегайтесь.</b></div>
<div class="dash" style="top:310px"></div>
<div class="sig" style="top:316px"><span style="color:#c71585">Пишем речь для выступления</span> <span style="color:#8c8c8c">||</span> <span style="color:#800080">Основы рекламы</span> <span style="color:#8c8c8c">||</span> <span style="color:#8b0000">Создаем бизнес-план</span> <span style="color:#8c8c8c">||</span> <span style="color:#2f9a1e">Умение вести переговоры</span> <span style="color:#000">||</span> <span style="color:#4b0a5a">Нейронаука обучения</span> <span style="color:#000">||</span> <span style="color:#000080">Как улучшить память. Курс для чемпионов</span> <span style="color:#000">||</span> <span style="color:#99104a">Как</span><br><span style="color:#99104a">запоминать до <span style="color:#c8102e">200</span> человек по именам</span> <span style="color:#000">||</span> <span style="color:#b2181e">ETSY - руководство по поиску ключевых слов</span> <span style="color:#c0a000">||</span> <span style="color:#b8b020">Научитесь</span> <span style="color:#b010a0">Лидерству</span> <span style="color:#d0a020">и</span> <span style="color:#5a10b0">Управлению</span> <span style="color:#000">||</span> <span style="color:#d81cc8">Феноменальная память</span> <span style="color:#000">||</span> <span style="color:#2e9a2e">Binder Clips, Начни с</span><br><span style="color:#2e9a2e">себя! Измени свои привычки - измени свою жизнь!</span></div>
<div class="newfold" style="top:182px"></div><div class="new" style="top:185px">Новое</div>
<div class="hdr" style="top:410px"><span style="left:9.5px">только что</span><span style="left:75.3px">Редактировать</span><span style="left:164.3px">Удалить</span><span style="left:216.3px">Пожаловаться</span><span style="left:1083.5px;letter-spacing:-.2px">#11</span><span style="left:1111.3px;letter-spacing:.5px">Ответить</span></div>
<div class="post" style="top:431px;height:304px;background:linear-gradient(#fcfcff,#fcfcff 278px,#ebebed)"></div>
<div class="ucol" style="top:431px;height:122px"></div>
<div class="arrow" style="top:441px"></div>
<div class="ucol" style="top:553px;height:68px;background:#dbeaf8"></div>
<div class="ava" style="top:441px"><svg style="left:-1px;top:-1px" width="102" height="102" viewBox="0 0 102 102"><defs><linearGradient id="cb" x1="0" y1="0" x2="1" y2="0"><stop offset="0" stop-color="#5e5e76"/><stop offset=".45" stop-color="#84849a"/><stop offset="1" stop-color="#606078"/></linearGradient><linearGradient id="cw" x1="0" y1="0" x2="0" y2="1"><stop offset="0" stop-color="#e6e8e4"/><stop offset=".3" stop-color="#fbfbfb"/><stop offset="1" stop-color="#f3f4f2"/></linearGradient><clipPath id="cc"><rect x="3" y="3" width="96" height="96"/></clipPath><filter id="cf" x="-5%" y="-5%" width="110%" height="110%"><feGaussianBlur stdDeviation=".8"/></filter></defs>
<g clip-path="url(#cc)">
<rect x="3" y="3" width="96" height="96" fill="url(#cb)"/>
<g filter="url(#cf)">
<path d="M46,13 L70,11.5 L99,14 V22 L46,22 Z" fill="#a9a99a"/>
<path d="M0,22.5 L40,19.5 L86,17 L102,19 V102 H0 Z" fill="#a7a87e"/>
<path d="M0,40 L50,35 L58,58 L52,80 L0,92 Z" fill="#b0bea0"/>
<path d="M0,58 L44,52 L54,72 L10,86 L0,86 Z" fill="#9fb69a" opacity=".85"/>
<path d="M0,27.5 L17,26 L18,36 L0,38 Z" fill="#4f5644"/><path d="M5.5,29.2 L12.5,28.6 L13,34.6 L6,35.2 Z" fill="#a7a87e"/>
<path d="M20,27.5 L62,22.5 L62.5,27.5 L20.5,33 Z" fill="#4c4c3c"/>
<path d="M3,44.5 L43,41 L43.3,45 L3,48.6 Z" fill="#3a6a54" opacity=".7"/><path d="M3,54 L9,53.5 L9.2,57.5 L3,58 Z" fill="#3a6a54" opacity=".7"/>
<path d="M56,32 C58,22 74,17 88,18.5 L102,19 V102 H88 L84,78 C76,76 66,72 62,62 C58,52 54,42 56,32 Z" fill="#a99b72"/>
<path d="M57,36 C59,26 70,20 82,21 C92,22 97,27 100,32 V42 C94,35 86,31 78,33 C71,35 69,43 69,51 C69,59 71,65 73,71 C66,67 60,59 58,49 Z" fill="#4e4a36" opacity=".9"/>
<path d="M71,41 C77,35 90,35 97,43 C99,53 98,64 94,73 C88,79 80,76 76,70 C70,62 69,50 71,41 Z" fill="#b6a87e"/>
<path d="M74,49 C77,47.5 82,47.5 84.5,49.5 M88.5,50 C91,48.5 95,49 97.5,51" stroke="#3c382a" stroke-width="2.4" fill="none"/><path d="M87,52 C86,58 85.5,62 88,65 C90,66 92,65.5 93,64" stroke="#6a6044" stroke-width="1.6" fill="none"/><path d="M81,70 C85,71.5 90,71.5 94,69.5" stroke="#5a5038" stroke-width="1.8" fill="none"/>
<path d="M78,60 C80,64 80,68 79,72 C76,68 74,62 74,56 Z" fill="#8a7e5a" opacity=".7"/>
<path d="M85,78 L102,70 V102 H92 Z" fill="#48442f" opacity=".95"/>
<circle cx="30.5" cy="65" r="11.5" fill="#323e34"/><circle cx="30.5" cy="65" r="7.2" fill="none" stroke="#93a28e" stroke-width="1.5"/><circle cx="30.5" cy="65" r="4" fill="#56665a"/>
</g>
<path d="M9,86.5 L29,83 L30,79.5 L33,82.5 L58,77.5 L60,73 L66,76 L85,71.5 L92.5,102 H11 Z" fill="url(#cw)"/>
<path d="M9,86.5 L29,83 L33,82.5 L58,77.5 L66,76 L85,71.5" stroke="#80807c" stroke-width="2.2" fill="none"/><path d="M10,85 L29,81.6 M34,80.8 L58,76 M67,74.4 L84,70.2" stroke="#dededa" stroke-width="1.2" fill="none"/>
<path d="M28.5,82 L28,24 C27,20 19,17 19,12 C19,7 24,4.5 33,4.5 C42,4.5 48.5,7 49,12 C49.3,16 44,18 44.5,23 C46,34 58,62 65.5,76" fill="none" stroke="#50524a" stroke-width="2.6" stroke-linejoin="round"/>
<path d="M28.5,82 L28,24 C27,20 19,17 19,12 C19,7 24,4.5 33,4.5 C42,4.5 48.5,7 49,12 C49.3,16 44,18 44.5,23 C46,34 58,62 65.5,76" fill="none" stroke="#d6d8d4" stroke-width="1.3" stroke-linejoin="round"/>
</g>
</svg>
</div>
<div class="uname" style="top:560px">Binder Clips</div>
<div class="ribfold" style="top:579px;border-left-color:#9fb2c2"></div>
<div class="rib" style="top:584px;background:#eef5fc;border-top:1px solid #aebfce;box-shadow:0 0 2px rgba(0,0,0,.25)"></div>
<div class="ribt" style="top:583px;left:99px;color:#1c4a78;text-shadow:none">Складчик</div>
<div class="abs" style="left:69px;top:440px;width:0;height:0;border-top:13px solid #6cb81e;border-right:13px solid transparent"></div>
<div class="msg" style="top:457px">Навыки нужно использовать , управляй доходным делом.<br>На предыдущей складчине многие хорошо заработали , вписывайся в повтор <span style="color:#1c5486;letter-spacing:-.07px">https://skladchik.com/threads/повтор-готовый-бизнес-Чистая-прибыль-в-день-от-3000р-<br>до-6000р.110798/</span></div>
<div class="newfold" style="top:433px"></div><div class="new" style="top:436px">Новое</div>
</div>
<div id="sbar"><div class="abs" style="left:0;top:0;width:1px;height:603px;background:#fbfbfb"></div><div class="abs" style="left:2px;top:511px;width:12px;height:76px;background:#c1c0c0"></div><div class="abs" style="left:4.5px;top:7px;width:0;height:0;border:4px solid transparent;border-bottom:4.5px solid #505050;border-top:none"></div></div>
</div></body></html>
